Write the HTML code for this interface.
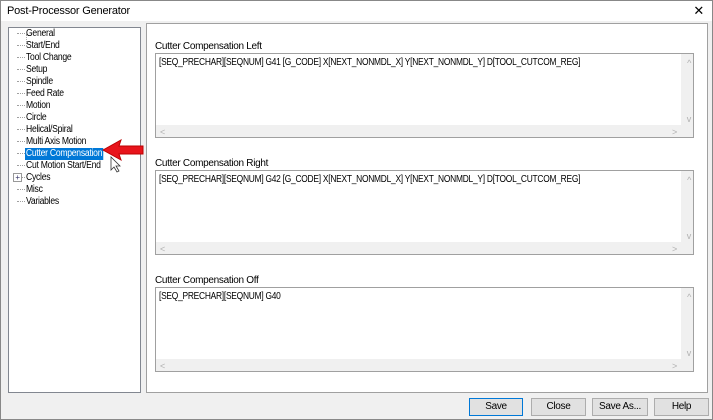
<!DOCTYPE html>
<html><head><style>
*{margin:0;padding:0;box-sizing:border-box}
body{width:713px;height:420px;background:#f0f0f0;font-family:"Liberation Sans",sans-serif;font-size:10px;letter-spacing:-0.3px;color:#000;position:relative;overflow:hidden;border:1px solid #888}
.abs{position:absolute}
.title{left:0;top:0;width:711px;height:20px;background:#fff;}
.tt{position:absolute;left:6px;top:4px;font-size:11px;letter-spacing:-0.2px}
.x{position:absolute;right:8px;top:2px;font-size:13px}
.tree{left:7px;top:26px;width:133px;height:366px;background:#fff;border:1px solid #828790}
.tree div{position:absolute;left:17px;height:12px;line-height:12px;white-space:nowrap;transform:scaleX(0.86);transform-origin:left}
.vline{position:absolute;left:8px;top:6px;width:0;height:166px;border-left:1px dotted #a0a0a0}
.h{position:absolute;left:8px;width:8px;border-top:1px dotted #a0a0a0}
.panel{left:145px;top:22px;width:562px;height:370px;background:#fff;border:1px solid #a0a0a0}
.lbl{position:absolute;left:8px}
.ta{position:absolute;left:8px;width:539px;height:85px;border:1px solid #a0a0a0;background:#fff}
.ta .t{position:absolute;left:3px;top:3px;white-space:nowrap;transform:scaleX(0.84);transform-origin:left}
.ta .hs{position:absolute;left:0;bottom:0;width:525px;height:12px;background:#f0f0f0}
.ta .vs{position:absolute;right:0;top:0;width:12px;height:83px;background:#f0f0f0}
.ta .c{position:absolute;color:#b0b0b0;font-size:9px}
.btn{position:absolute;top:397px;height:18px;background:#e1e1e1;border:1px solid #adadad;text-align:center;line-height:16px}
</style></head><body>
<div class="abs title"><span class="tt">Post-Processor Generator</span><span class="x">✕</span></div>
<div class="abs tree">
<div class="vline"></div>
<span class="h" style="top:5px"></span><div style="top:0">General</div>
<span class="h" style="top:17px"></span><div style="top:12px">Start/End</div>
<span class="h" style="top:29px"></span><div style="top:24px">Tool Change</div>
<span class="h" style="top:41px"></span><div style="top:36px">Setup</div>
<span class="h" style="top:53px"></span><div style="top:48px">Spindle</div>
<span class="h" style="top:65px"></span><div style="top:60px">Feed Rate</div>
<span class="h" style="top:77px"></span><div style="top:72px">Motion</div>
<span class="h" style="top:89px"></span><div style="top:84px">Circle</div>
<span class="h" style="top:101px"></span><div style="top:96px">Helical/Spiral</div>
<span class="h" style="top:113px"></span><div style="top:108px">Multi Axis Motion</div>
<span class="h" style="top:125px"></span><div style="top:120px;background:#0078d7;color:#fff;padding:0 1px;left:16px">Cutter Compensation</div>
<span class="h" style="top:137px"></span><div style="top:132px">Cut Motion Start/End</div>
<span class="h" style="top:149px"></span><div style="top:144px">Cycles</div>
<span style="position:absolute;left:4px;top:145px;width:9px;height:9px;border:1px solid #999;background:#fff;font-size:8px;line-height:7px;text-align:center;color:#336">+</span>
<span class="h" style="top:161px"></span><div style="top:156px">Misc</div>
<span class="h" style="top:173px"></span><div style="top:168px">Variables</div>
</div>
<svg class="abs" style="left:98px;top:138px" width="50" height="34"><polygon points="4,11 22,1 20,7 44,7 44,15 20,15 22,21" fill="#e8141b" stroke="#b00" stroke-width="1"/><path d="M12,18 L12,31 L15,28 L18,33 L20,32 L17,27 L21,27 Z" fill="#fff" stroke="#333" stroke-width="0.8"/></svg>
<div class="abs panel">
<div class="lbl" style="top:17px">Cutter Compensation Left</div>
<div class="ta" style="top:29px"><div class="t">[SEQ_PRECHAR][SEQNUM] G41 [G_CODE] X[NEXT_NONMDL_X] Y[NEXT_NONMDL_Y] D[TOOL_CUTCOM_REG]</div><div class="hs"></div><div class="vs"></div><span class="c" style="right:2px;top:4px">^</span><span class="c" style="right:2px;top:60px">v</span><span class="c" style="left:4px;bottom:0">&lt;</span><span class="c" style="right:16px;bottom:0">&gt;</span></div>
<div class="lbl" style="top:134px">Cutter Compensation Right</div>
<div class="ta" style="top:146px"><div class="t">[SEQ_PRECHAR][SEQNUM] G42 [G_CODE] X[NEXT_NONMDL_X] Y[NEXT_NONMDL_Y] D[TOOL_CUTCOM_REG]</div><div class="hs"></div><div class="vs"></div><span class="c" style="right:2px;top:4px">^</span><span class="c" style="right:2px;top:60px">v</span><span class="c" style="left:4px;bottom:0">&lt;</span><span class="c" style="right:16px;bottom:0">&gt;</span></div>
<div class="lbl" style="top:251px">Cutter Compensation Off</div>
<div class="ta" style="top:263px"><div class="t">[SEQ_PRECHAR][SEQNUM] G40</div><div class="hs"></div><div class="vs"></div><span class="c" style="right:2px;top:4px">^</span><span class="c" style="right:2px;top:60px">v</span><span class="c" style="left:4px;bottom:0">&lt;</span><span class="c" style="right:16px;bottom:0">&gt;</span></div>
</div>
<div class="btn" style="left:468px;width:54px;border:1px solid #0078d7">Save</div>
<div class="btn" style="left:530px;width:55px">Close</div>
<div class="btn" style="left:591px;width:56px">Save As...</div>
<div class="btn" style="left:653px;width:55px">Help</div>
</body></html>
